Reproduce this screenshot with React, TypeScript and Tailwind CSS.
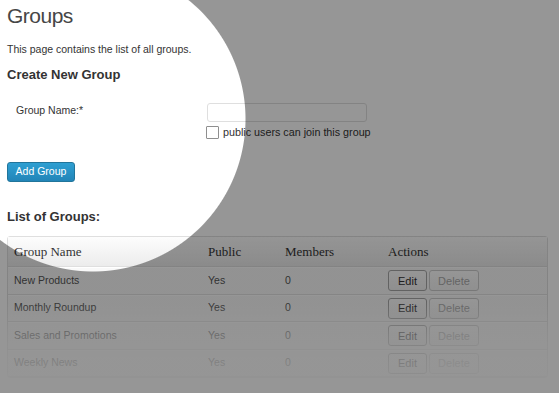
import React from "react";

const rows = [
  { name: "New Products", pub: "Yes", members: "0" },
  { name: "Monthly Roundup", pub: "Yes", members: "0" },
  { name: "Sales and Promotions", pub: "Yes", members: "0" },
  { name: "Weekly News", pub: "Yes", members: "0" },
];

export default function App() {
  return (
    <div className="relative w-[559px] h-[393px] overflow-hidden bg-white font-['Liberation_Sans',Arial,sans-serif] text-[#333]">
      <div className="pl-[7px] pr-[11px] pt-[3px]">
        <h2 className="text-[21px] leading-[26px] tracking-[-0.5px] text-[#464646]">Groups</h2>
        <p className="mt-[13px] text-[10.5px] leading-[14px]">This page contains the list of all groups.</p>
        <h3 className="mt-[11px] text-[13px] leading-[16px] font-bold text-[#333]">Create New Group</h3>

        <div className="mt-[20px] flex">
          <div className="w-[199px] pl-[9px] text-[10.5px] leading-[15px]">Group Name:*</div>
          <div className="flex flex-col">
            <div className="ml-px w-[160px] h-[19px] border border-[#dfdfdf] rounded-[3px] bg-white"></div>
            <div className="mt-[4px] flex items-center gap-[4px]">
              <div className="w-[13px] h-[13px] border border-[#8f8f8f] rounded-[1px] bg-white"></div>
              <span className="text-[10.75px] leading-[13px]">public users can join this group</span>
            </div>
          </div>
        </div>

        <button className="mt-[23px] flex h-[20px] w-[68px] items-center justify-center rounded-[3px] border border-[#21759b] bg-[linear-gradient(to_bottom,#2e9fd2,#2285b8)] text-[10.5px] text-white">
          Add Group
        </button>

        <h3 className="mt-[27px] text-[13px] leading-[16px] font-bold text-[#333]">List of Groups:</h3>

        <div className="mt-[11px] w-[541px] border border-[#dfdfdf] rounded-[3px] bg-[#f9f9f9]">
          <div className="grid grid-cols-[194px_77px_103px_1fr] h-[30px] items-center border-b border-[#dfdfdf] bg-[linear-gradient(to_bottom,#fdfdfd,#ececec)] font-['Liberation_Serif',Georgia,serif] text-[13px] text-[#333]">
            <div className="pl-[6px]">Group Name</div>
            <div className="pl-[6px]">Public</div>
            <div className="pl-[6px]">Members</div>
            <div className="pl-[6px]">Actions</div>
          </div>
          {rows.map((r) => (
            <div
              key={r.name}
              className="grid grid-cols-[194px_77px_103px_1fr] h-[27.5px] items-center border-t border-t-white border-b border-b-[#e2e2e2] text-[10.5px] text-[#555]"
            >
              <div className="pl-[6px]">{r.name}</div>
              <div className="pl-[6px]">{r.pub}</div>
              <div className="pl-[6px]">{r.members}</div>
              <div className="pl-[6px] flex gap-[2px]">
                <div className="flex h-[21px] w-[39px] items-center justify-center rounded-[3px] border border-[#a6a6a6] bg-[linear-gradient(to_bottom,#fefefe,#f2f2f2)] text-[11px] text-[#333]">
                  Edit
                </div>
                <div className="flex h-[21px] w-[50px] items-center justify-center rounded-[3px] border border-[#cccccc] bg-[linear-gradient(to_bottom,#fefefe,#f4f4f4)] text-[11px] text-[#aaa]">
                  Delete
                </div>
              </div>
            </div>
          ))}
        </div>
      </div>

      <div className="pointer-events-none absolute inset-0 bg-[linear-gradient(to_bottom,transparent_300px,rgba(255,255,255,0.6)_336px,rgba(255,255,255,0.8)_364px,rgba(255,255,255,0.9)_393px)]"></div>
      <div className="pointer-events-none absolute inset-0 bg-[radial-gradient(circle_at_93px_119px,transparent_152px,rgba(0,0,0,0.41)_153px)]"></div>
    </div>
  );
}
